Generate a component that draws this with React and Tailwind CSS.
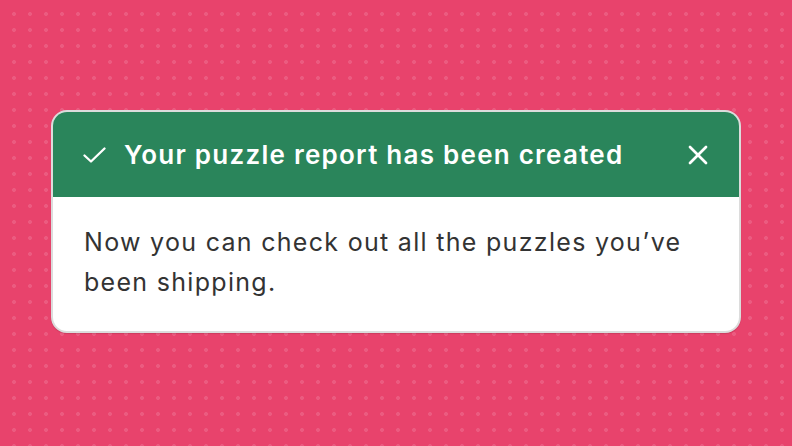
import { X } from 'lucide-react';

const CheckIcon = () => (
    <svg className="w-[23px] h-4 shrink-0" viewBox="0 0 23 16" fill="none" stroke="currentColor" strokeWidth="2.3" strokeLinecap="round" strokeLinejoin="round">
        <path d="M1.5 8.5L8 14.5L21.5 1.5" />
    </svg>
);

const Toast = ({ title, children, onClose }) => (
    <div className="w-[690px] rounded-[16px] border-2 border-[#dcdcdc] bg-white overflow-hidden shadow-[0_1px_1px_rgba(0,0,0,0.12)]">
        {/* Header */}
        <div className="flex items-center justify-between h-[85px] pl-[30px] pr-[25px] bg-[#2a855b] text-white">
            <div className="flex items-center gap-[18px]">
                <CheckIcon />
                <span className="text-[26px] font-semibold tracking-[1.25px]">{title}</span>
            </div>
            <button onClick={onClose} className="text-white">
                <X size={32} strokeWidth={2} />
            </button>
        </div>
        {/* Body */}
        <div className="pl-[31px] pr-[40px] pt-[25px] pb-[29px] text-[25px] leading-[40px] tracking-[1.3px] text-[#333]">
            {children}
        </div>
    </div>
);

export default function App() {
    return (
        <div
            className="w-[792px] h-[446px] pb-[3px] flex items-center justify-center bg-[#e8436c] bg-[radial-gradient(circle,#eb5b80_1.8px,transparent_2.2px)] bg-[length:16px_16px] bg-[position:6px_6px]"
            style={{ fontFamily: 'Inter, "Noto Sans", sans-serif' }}
        >
            <Toast title="Your puzzle report has been created">
                Now you can check out all the puzzles you’ve been shipping.
            </Toast>
        </div>
    );
}
